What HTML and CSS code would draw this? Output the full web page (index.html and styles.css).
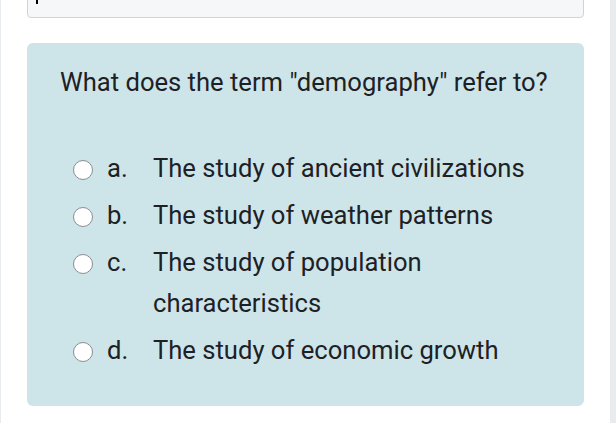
FILE: index.html
```html
<!DOCTYPE html>
<html>
<head>
<meta charset="utf-8">
<link rel="stylesheet" href="styles.css">
</head>
<body>
<div class="page">
  <div class="main">
    <div class="answer-box"><span class="caret"></span></div>
    <div class="card">
      <div class="question">What does the term "demography" refer to?</div>
      <div class="options">
        <label class="option"><span class="radio"></span><span class="letter">a.</span><span class="text">The study of ancient civilizations</span></label>
        <label class="option"><span class="radio"></span><span class="letter">b.</span><span class="text">The study of weather patterns</span></label>
        <label class="option"><span class="radio"></span><span class="letter">c.</span><span class="text">The study of population characteristics</span></label>
        <label class="option"><span class="radio"></span><span class="letter">d.</span><span class="text">The study of economic growth</span></label>
      </div>
    </div>
  </div>
  <div class="side"></div>
</div>
</body>
</html>
```
FILE: styles.css
```css
* { box-sizing: border-box; }
html, body { margin: 0; padding: 0; }
body {
  width: 616px;
  height: 423px;
  overflow: hidden;
  background: #fff;
  font-family: Roboto, "Noto Sans", sans-serif;
  color: #1d2125;
}
.page {
  display: flex;
  height: 423px;
  border-left: 1px solid #e9ecef;
}
.main {
  flex: 1;
  padding: 0 26px 0 26px;
}
.side {
  width: 6px;
  background: #e9ecef;
}
.answer-box {
  margin-top: -22px;
  height: 40px;
  background: #f6f7f9;
  border: 1px solid #ced4da;
  border-radius: 4px;
  position: relative;
}
.caret {
  position: absolute;
  left: 8px;
  top: 21px;
  width: 2px;
  height: 4px;
  background: #000;
}
.card {
  margin-top: 25px;
  height: 363px;
  background: #cde5e9;
  border-radius: 6px;
  padding: 23px 0 0 33px;
}
.question {
  font-size: 25.6px;
  line-height: 33px;
}
.options {
  margin-top: 49px;
  display: flex;
  flex-direction: column;
  gap: 6px;
}
.option {
  display: flex;
  align-items: flex-start;
  font-size: 25.6px;
  line-height: 41px;
}
.radio {
  flex: none;
  width: 20px;
  height: 20px;
  margin: 12px 14px 0 13px;
  border: 1.5px solid #8a8d90;
  border-radius: 50%;
  background: #fff;
}
.letter {
  flex: none;
  width: 46px;
}
.text {
  width: 400px;
}
```
